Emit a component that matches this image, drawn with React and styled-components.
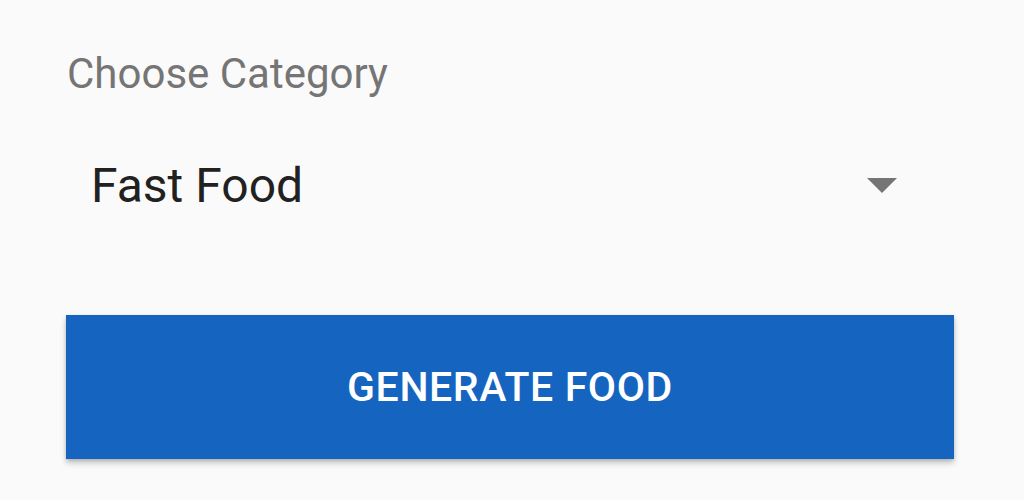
import React from "react";
import styled, { createGlobalStyle } from "styled-components";

const GlobalStyle = createGlobalStyle`
  html, body {
    margin: 0;
    padding: 0;
    background: #fafafa;
  }
  body {
    font-family: Roboto, "Noto Sans", sans-serif;
  }
`;

const Screen = styled.main`
  width: 1024px;
  height: 500px;
  box-sizing: border-box;
  padding: 48px 70px 0 66px;
  display: flex;
  flex-direction: column;
  background: #fafafa;
`;

const Label = styled.label`
  font-size: 42px;
  line-height: 52px;
  color: #757575;
  padding-left: 1px;
`;

const SelectRow = styled.div`
  display: flex;
  align-items: center;
  justify-content: space-between;
  height: 120px;
  margin-top: 25px;
  padding: 0 57px 0 25px;
`;

const SelectedValue = styled.span`
  font-size: 48px;
  color: #212121;
`;

const Arrow = styled.span`
  width: 0;
  height: 0;
  border-left: 15px solid transparent;
  border-right: 15px solid transparent;
  border-top: 15px solid #757575;
`;

const Button = styled.button`
  margin-top: 70px;
  height: 144px;
  width: 888px;
  border: none;
  background: #1565c0;
  color: #ffffff;
  font-family: Roboto, "Noto Sans", sans-serif;
  font-size: 41px;
  font-weight: 500;
  letter-spacing: 0.6px;
  text-transform: uppercase;
  box-shadow: 0 4px 6px rgba(0, 0, 0, 0.22), 0 1px 3px rgba(0, 0, 0, 0.12);
`;

const App = () => {
  return (
    <>
      <GlobalStyle />
      <Screen>
        <Label>Choose Category</Label>
        <SelectRow>
          <SelectedValue>Fast Food</SelectedValue>
          <Arrow />
        </SelectRow>
        <Button>Generate Food</Button>
      </Screen>
    </>
  );
};

export default App;
